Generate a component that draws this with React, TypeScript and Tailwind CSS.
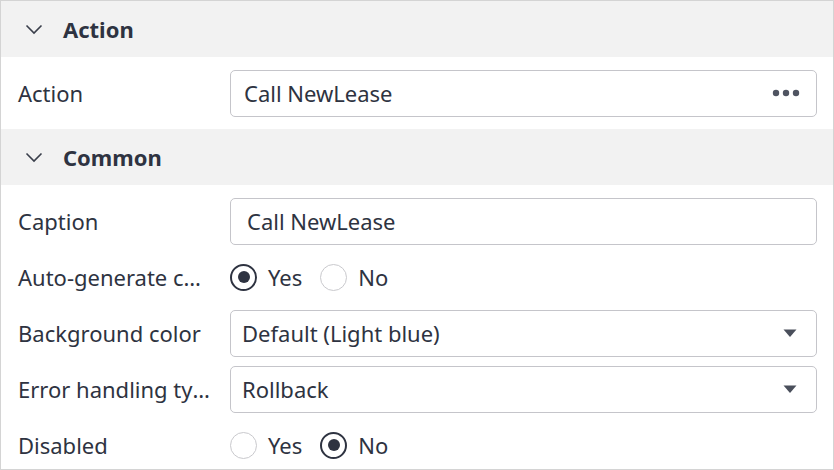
import React from "react";

const font = { fontFamily: '"Noto Sans", "Open Sans", sans-serif' };

function Chevron() {
  return (
    <svg width="18" height="12" viewBox="0 0 18 12" className="shrink-0">
      <path d="M1.5 2.5 L9 10 L16.5 2.5" fill="none" stroke="#3a3f4b" strokeWidth="1.6" />
    </svg>
  );
}

function SectionHeader({ title }: { title: string }) {
  return (
    <div className="h-[56px] bg-[#f2f2f2] flex items-center pl-[24px] gap-[20px]">
      <Chevron />
      <span className="font-bold text-[22px] text-[#2e3341]">{title}</span>
    </div>
  );
}

function Label({ children }: { children: React.ReactNode }) {
  return (
    <div className="w-[229px] shrink-0 pl-[17px] pr-[18px] truncate text-[22px] text-[#2e3341]">
      {children}
    </div>
  );
}

function Radio({ checked, label }: { checked: boolean; label: string }) {
  return (
    <div className="flex items-center gap-[11px]">
      <span
        className={`w-[27px] h-[27px] rounded-full flex items-center justify-center ${
          checked ? "border-2 border-[#2e3341]" : "border-[1.5px] border-[#c9c9cd]"
        }`}
      >
        {checked && <span className="w-[12px] h-[12px] rounded-full bg-[#2e3341]" />}
      </span>
      <span className="text-[22px] text-[#2e3341]">{label}</span>
    </div>
  );
}

function Field({
  value,
  pad,
  right,
}: {
  value: string;
  pad: string;
  right?: React.ReactNode;
}) {
  return (
    <div
      className={`flex-1 h-[47px] rounded-[5px] border-[1.5px] border-[#c5c5ca] bg-white flex items-center ${pad} pr-[16px]`}
    >
      <span className="flex-1 text-[22px] text-[#2e3341] truncate">{value}</span>
      {right}
    </div>
  );
}

const dots = (
  <svg width="28" height="8" viewBox="0 0 28 8">
    <circle cx="4" cy="4" r="3.2" fill="#4f5461" />
    <circle cx="14" cy="4" r="3.2" fill="#4f5461" />
    <circle cx="24" cy="4" r="3.2" fill="#4f5461" />
  </svg>
);

const caret = (
  <svg width="16" height="10" viewBox="0 0 16 10" className="mr-[2px]">
    <path d="M1.5 1.5 H14.5 L8 9 Z" fill="#4a4f5b" />
  </svg>
);

export default function App() {
  return (
    <div
      style={font}
      className="w-[834px] h-[470px] overflow-hidden border border-[#d4d4d4] bg-white"
    >
      {/* Action */}
      <SectionHeader title="Action" />
      <div className="h-[72px] flex items-center pr-[16px]">
        <Label>Action</Label>
        <Field value="Call NewLease" pad="pl-[13px]" right={dots} />
      </div>

      {/* Common */}
      <SectionHeader title="Common" />
      <div className="pt-[8px]">
        <div className="h-[56px] flex items-center pr-[16px]">
          <Label>Caption</Label>
          <Field value="Call NewLease" pad="pl-[16px]" />
        </div>
        <div className="h-[56px] flex items-center pr-[16px]">
          <Label>Auto-generate caption</Label>
          <div className="flex items-center gap-[18px]">
            <Radio checked label="Yes" />
            <Radio checked={false} label="No" />
          </div>
        </div>
        <div className="h-[56px] flex items-center pr-[16px]">
          <Label>Background color</Label>
          <Field value="Default (Light blue)" pad="pl-[11px]" right={caret} />
        </div>
        <div className="h-[56px] flex items-center pr-[16px]">
          <Label>Error handling type</Label>
          <Field value="Rollback" pad="pl-[11px]" right={caret} />
        </div>
        <div className="h-[56px] flex items-center pr-[16px]">
          <Label>Disabled</Label>
          <div className="flex items-center gap-[18px]">
            <Radio checked={false} label="Yes" />
            <Radio checked label="No" />
          </div>
        </div>
      </div>
    </div>
  );
}
